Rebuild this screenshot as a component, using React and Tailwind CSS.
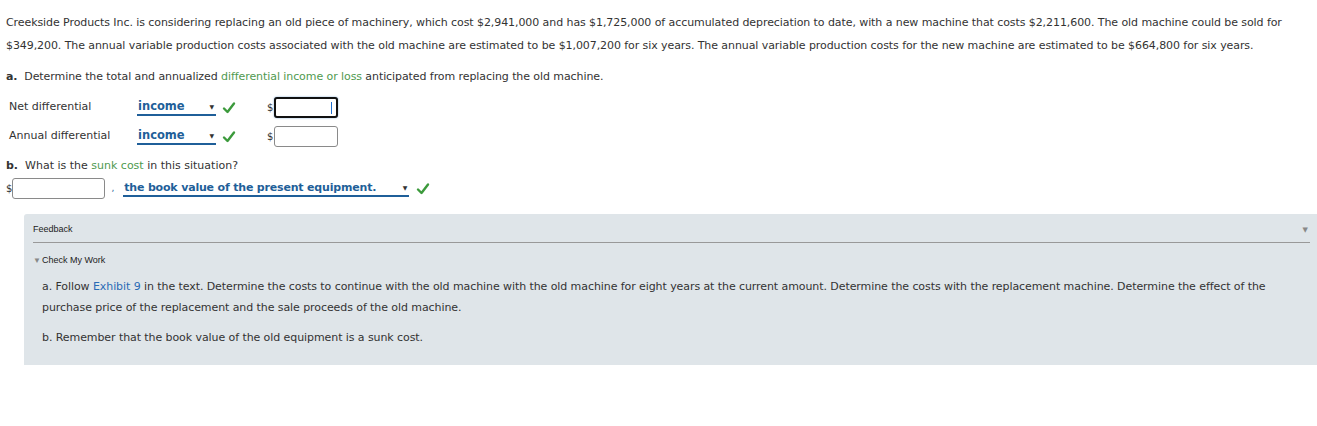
import React from "react";

const Check = () => (
  <svg width="14" height="14" viewBox="0 0 14 14" className="shrink-0">
    <path d="M2 7.5 L5.5 11 L12 2.5" fill="none" stroke="#3c9a3c" strokeWidth="2.4" strokeLinecap="round" strokeLinejoin="round" />
  </svg>
);

const Pick = ({ label, width, tight }) => (
  <div
    className="flex items-center justify-between h-[16px] border-b-2 border-[#1f5f99] pr-[2px]"
    style={{ width }}
  >
    <span
      className={
        "font-bold text-[#1f5f99] leading-none pl-[1px] " +
        (tight ? "text-[11px] tracking-[-0.18px]" : "text-[11.5px]")
      }
    >
      {label}
    </span>
    <span className="text-[6px] text-[#333] leading-none">▼</span>
  </div>
);

const Box = ({ w, focused }) => (
  <div
    className={
      "h-[21px] rounded-[3px] bg-white flex items-center justify-end pr-[4px] " +
      (focused ? "border-2 border-[#111] shadow-[0_0_2px_#7aa7d6]" : "border border-[#8a8a8a]")
    }
    style={{ width: w }}
  >
    {focused && <span className="block w-px h-[12px] bg-[#1f6fd0]" />}
  </div>
);

export default function App() {
  return (
    <div className="bg-white w-[1317px] h-[426px] text-[#333] text-[11px] font-['DejaVu_Sans','Verdana',sans-serif]">
      <div className="pl-[6px] pt-[11px]">
        <p className="leading-[23px] w-[1300px] tracking-[-0.08px]">
          Creekside Products Inc. is considering replacing an old piece of machinery, which cost $2,941,000 and has $1,725,000 of accumulated depreciation to date, with a new machine that costs $2,211,600. The old machine could be sold for $349,200. The annual variable production costs associated with the old machine are estimated to be $1,007,200 for six years. The annual variable production costs for the new machine are estimated to be $664,800 for six years.
        </p>
        <p className="mt-[13px] leading-[14px] tracking-[-0.08px]">
          <span className="font-bold">a.</span>&nbsp; Determine the total and annualized{" "}
          <span className="text-[#4f9a4f]">differential income or loss</span> anticipated from replacing the old machine.
        </p>

        <div className="mt-[13px] flex flex-col gap-[8px] pl-[3px]">
          {["Net differential", "Annual differential"].map((l, i) => (
            <div key={l} className="flex items-center h-[21px]">
              <span className="w-[128px]">{l}</span>
              <Pick label="income" width={79} />
              <span className="ml-[6px]"><Check /></span>
              <span className="ml-[31px] text-[10px] text-[#333]">$</span>
              <span className="ml-[1px]"><Box w={64} focused={i === 0} /></span>
            </div>
          ))}
        </div>

        <p className="mt-[12px] leading-[14px]">
          <span className="font-bold">b.</span>&nbsp; What is the <span className="text-[#4f9a4f]">sunk cost</span> in this situation?
        </p>
        <div className="mt-[5px] flex items-center h-[21px]">
          <span className="text-[10px]">$</span>
          <Box w={93} />
          <span className="ml-[6px] text-[9px] text-[#1f5f99]">,</span>
          <span className="ml-[9px]"><Pick label="the book value of the present equipment." width={286} tight /></span>
          <span className="ml-[7px]"><Check /></span>
        </div>
      </div>

      <div className="mt-[15px] ml-[24px] bg-[#dfe5e9] h-[151px] pt-[10px] pl-[9px] pr-[7px] rounded-tl-[3px]">
        <div className="flex justify-between items-center h-[12px]">
          <span className="font-['Liberation_Sans',Arial,sans-serif] text-[9px] text-[#222]">Feedback</span>
          <span className="text-[7px] text-[#888] mr-[2px]">▼</span>
        </div>
        <div className="mt-[6px] h-px bg-[#999]" />
        <div className="mt-[11px] flex items-center gap-[1px] font-['Liberation_Sans',Arial,sans-serif] text-[9px] text-[#222]">
          <span className="text-[8px] text-[#888] leading-none">▼</span>Check My Work
        </div>
        <div className="pl-[9px] mt-[8px] tracking-[-0.08px]">
          <p className="leading-[21px] w-[1240px]">
            a. Follow <span className="text-[#2a6bb5]">Exhibit 9</span> in the text. Determine the costs to continue with the old machine with the old machine for eight years at the current amount. Determine the costs with the replacement machine. Determine the effect of the purchase price of the replacement and the sale proceeds of the old machine.
          </p>
          <p className="mt-[13px] leading-[14px]">b. Remember that the book value of the old equipment is a sunk cost.</p>
        </div>
      </div>
    </div>
  );
}
